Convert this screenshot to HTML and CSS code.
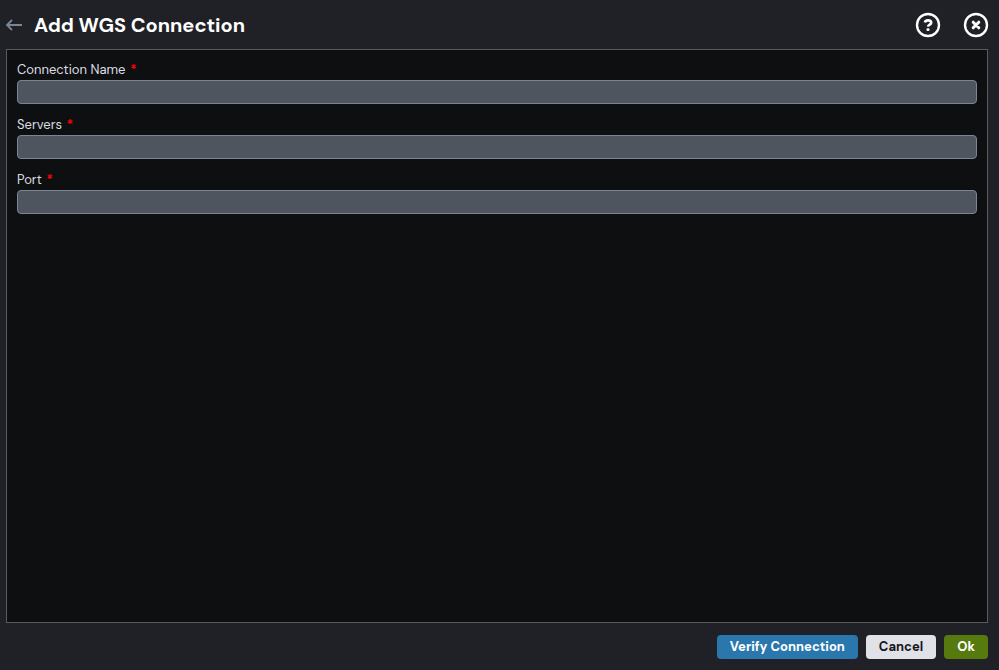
FILE: index.html
```html
<!DOCTYPE html>
<html lang="en">

<head>
    <meta charset="UTF-8">
    <meta name="viewport" content="width=device-width, initial-scale=1.0">
    <title>Add WGS Connection</title>
    <link rel="stylesheet" href="styles.css">
</head>

<body>
    <header class="header">
        <button type="button" class="icon-btn" aria-label="Back">
            <svg class="back-icon" width="16" height="12" viewBox="0 0 16 12">
                <path d="M16 6H1M6 1L1 6l5 5" />
            </svg>
        </button>
        <h1 class="title">Add WGS Connection</h1>
        <div class="header-actions">
            <button type="button" class="icon-btn" aria-label="Help">
                <svg class="round-icon" width="24" height="24" viewBox="1 1 24 24">
                    <circle cx="13" cy="13" r="11" />
                    <path class="question" d="M9.9 10.6C10.2 9 11.4 8.4 13 8.4c1.9 0 3.2.8 3.2 2.3 0 2-3 1.9-3.2 4" />
                    <rect class="dot" x="11.5" y="16.2" width="3" height="2.8" rx="1" />
                </svg>
            </button>
            <button type="button" class="icon-btn" aria-label="Close">
                <svg class="round-icon" width="24" height="24" viewBox="1 1 24 24">
                    <circle cx="13" cy="13" r="11" />
                    <path class="cross" d="M10.2 10.2l5.6 5.6M15.8 10.2l-5.6 5.6" />
                </svg>
            </button>
        </div>
    </header>

    <form id="connectionForm" class="panel">
        <div class="field">
            <label for="connectionName" class="input-label">Connection Name <span class="required">*</span></label>
            <input type="text" id="connectionName" name="connectionName" class="input-field" required>
        </div>
        <div class="field">
            <label for="servers" class="input-label">Servers <span class="required">*</span></label>
            <input type="text" id="servers" name="servers" class="input-field" required>
        </div>
        <div class="field">
            <label for="port" class="input-label">Port <span class="required">*</span></label>
            <input type="text" id="port" name="port" class="input-field" required>
        </div>
    </form>

    <footer class="footer">
        <button type="button" class="btn btn-verify">Verify Connection</button>
        <button type="button" class="btn btn-cancel">Cancel</button>
        <button type="submit" form="connectionForm" class="btn btn-ok">Ok</button>
    </footer>
</body>

</html>
```
FILE: styles.css
```css
* {
    box-sizing: border-box;
}

body {
    font-family: "DM Sans", Inter, sans-serif;
    font-size: 13px;
    background-color: #202126;
    color: #dcdee2;
    margin: 0;
    padding: 0 11px 11px 6px;
    min-height: 100vh;
    display: flex;
    flex-direction: column;
}

.header {
    display: flex;
    align-items: center;
    gap: 12px;
    height: 49px;
}

.title {
    margin: 0;
    font-size: 20px;
    line-height: 24px;
    font-weight: 700;
    color: #fff;
}

.header-actions {
    display: flex;
    gap: 24px;
    margin-left: auto;
}

.icon-btn {
    display: flex;
    padding: 0;
    border: none;
    background: none;
    cursor: pointer;
}

.back-icon {
    fill: none;
    stroke: #7b8595;
    stroke-width: 1.8;
}

.round-icon {
    overflow: visible;
    fill: none;
    stroke: #fff;
    stroke-width: 2.4;
}

.round-icon .question {
    stroke-width: 2.6;
}

.round-icon .cross {
    stroke-width: 3;
    stroke-linecap: round;
}

.round-icon .dot {
    fill: #fff;
    stroke: none;
}

.panel {
    flex: 1;
    padding: 10px;
    border: 1px solid #5a5b5e;
    background-color: #0e0f11;
}

.field {
    margin-bottom: 11px;
}

.input-label {
    display: block;
    line-height: 20px;
}

.required {
    margin-left: 1px;
    color: #ff0000;
    font-weight: 700;
}

.input-field {
    display: block;
    width: 100%;
    height: 24px;
    padding: 0 8px;
    border: 1px solid #7b8595;
    border-radius: 4px;
    background-color: #4f555f;
    color: #fff;
    font: inherit;
}

.footer {
    display: flex;
    justify-content: flex-end;
    gap: 8px;
    padding-top: 12px;
}

.btn {
    height: 24px;
    padding: 0 13px 2px;
    border: none;
    border-radius: 4px;
    font: inherit;
    font-weight: 700;
    color: #fff;
    cursor: pointer;
}

.btn-verify {
    background-color: #2a77ad;
}

.btn-cancel {
    background-color: #e0e2e7;
    color: #16171b;
}

.btn-ok {
    background-color: #567a0d;
}
```
